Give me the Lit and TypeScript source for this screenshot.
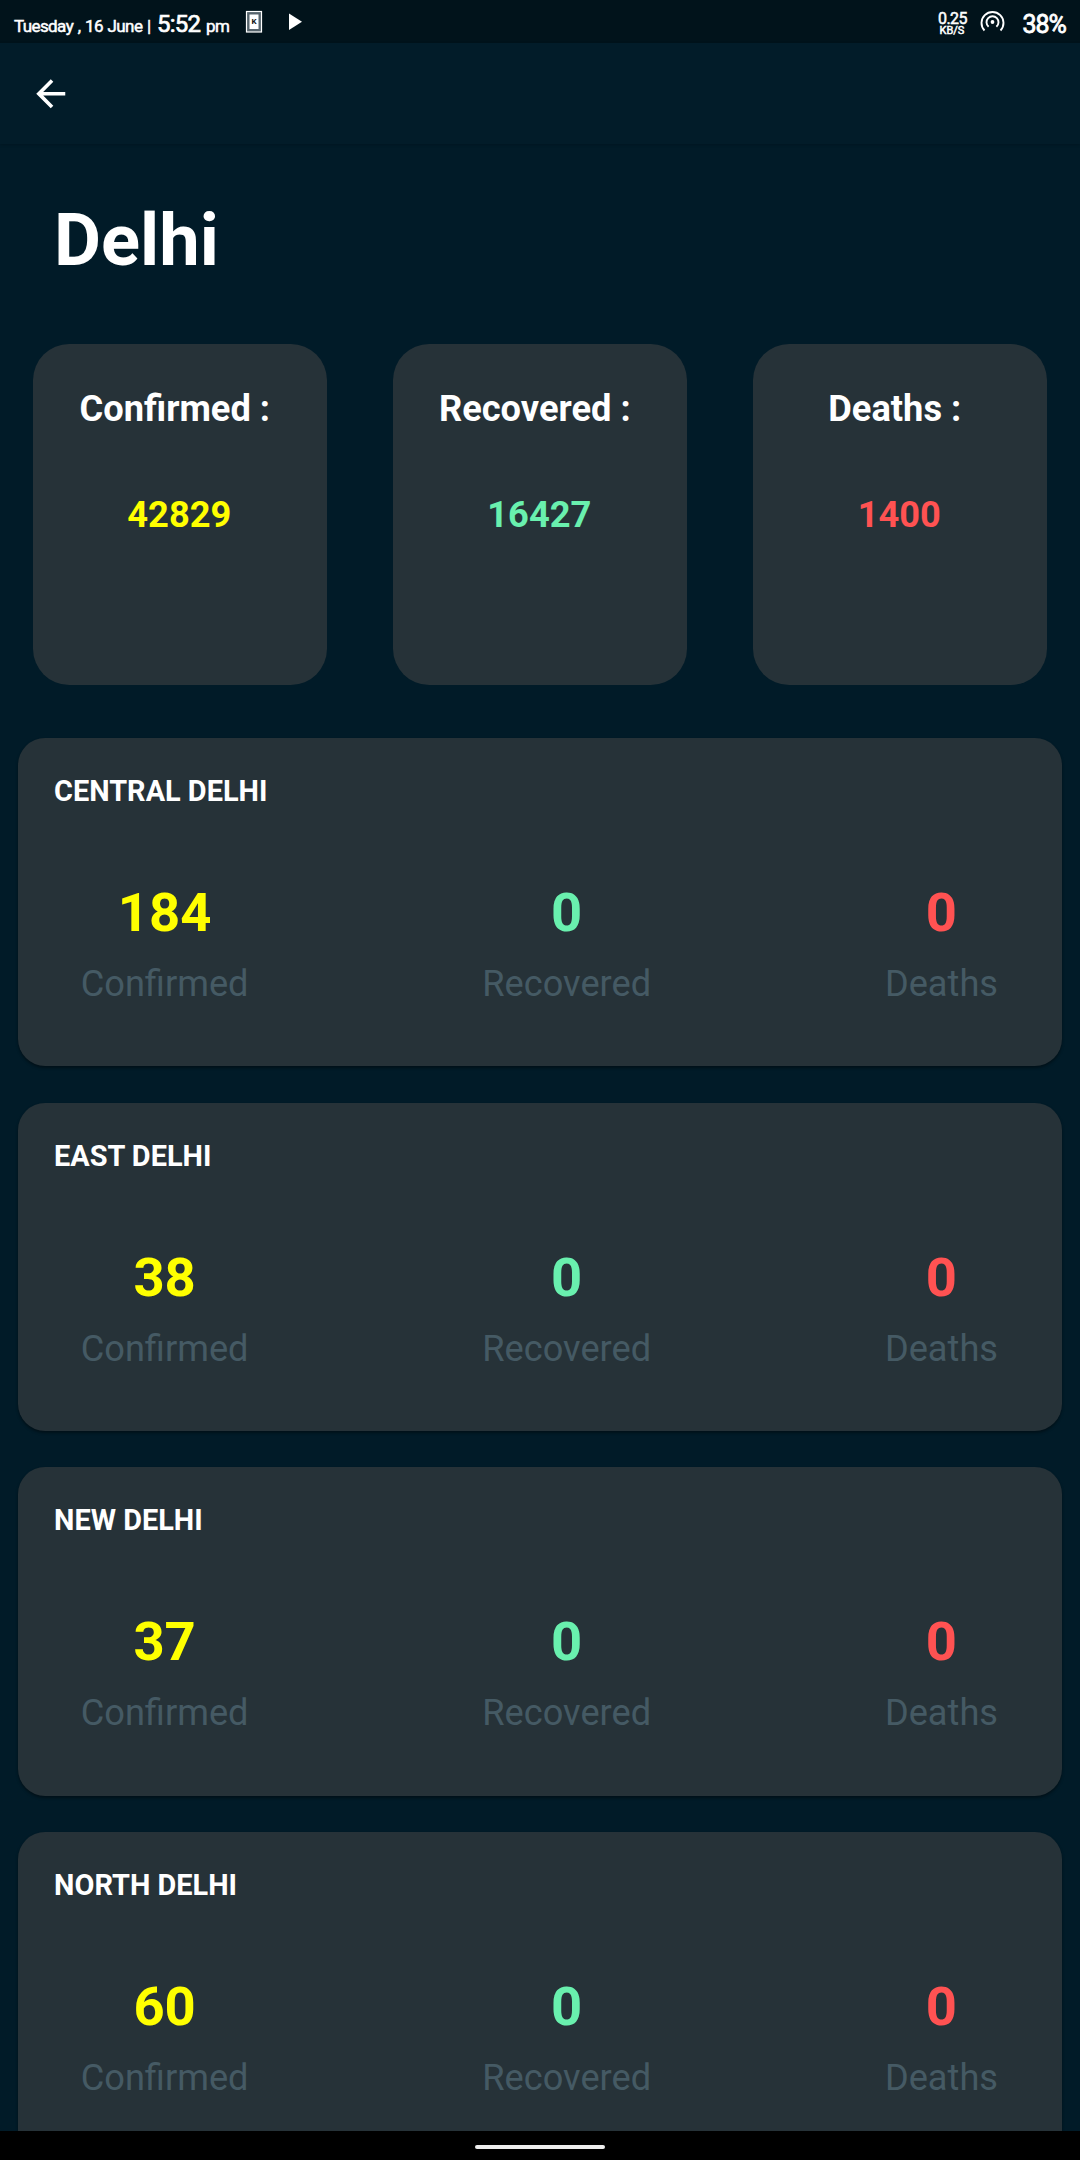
import { LitElement, html, css } from "lit";
import { customElement, property } from "lit/decorators.js";

interface District {
  name: string;
  confirmed: number;
  recovered: number;
  deaths: number;
}

const DISTRICTS: District[] = [
  { name: "CENTRAL DELHI", confirmed: 184, recovered: 0, deaths: 0 },
  { name: "EAST DELHI", confirmed: 38, recovered: 0, deaths: 0 },
  { name: "NEW DELHI", confirmed: 37, recovered: 0, deaths: 0 },
  { name: "NORTH DELHI", confirmed: 60, recovered: 0, deaths: 0 },
];

const TOTALS = [
  { label: "Confirmed", value: 42829, tone: "confirmed" },
  { label: "Recovered", value: 16427, tone: "recovered" },
  { label: "Deaths", value: 1400, tone: "deaths" },
];

const tones = css`
  .confirmed { color: #ffff00; }
  .recovered { color: #69f0ae; }
  .deaths { color: #ff5252; }
`;

@customElement("status-bar")
class StatusBar extends LitElement {
  static styles = css`
    :host {
      display: flex;
      justify-content: space-between;
      height: 43px;
      flex: none;
      background: #01131b;
    }
    svg { display: block; }
    text {
      fill: #fff;
      stroke: #fff;
      stroke-width: 0.5px;
      font-family: Roboto, sans-serif;
    }
    .date { font-size: 17px; letter-spacing: -0.6px; word-spacing: 1px; }
    .time { font-size: 24px; letter-spacing: -0.8px; stroke-width: 0.7px; }
    .rate { font-size: 16px; letter-spacing: -0.6px; }
    .unit { font-size: 11px; }
    .battery { font-size: 25px; letter-spacing: -1px; stroke-width: 0.8px; }
    .glyph { font-size: 8px; font-weight: 700; fill: #111; stroke: none; }
  `;
  render() {
    return html`
      <svg width="320" height="43" viewBox="0 0 320 43">
        <text class="date" x="14" y="32">Tuesday , 16 June |</text>
        <text class="time" x="157" y="32">5:52</text>
        <text class="date" x="206" y="32">pm</text>
        <rect x="246.5" y="11.5" width="15" height="20.5" fill="#56646c" stroke="#fff" stroke-width="1.2" />
        <rect x="249.5" y="14.5" width="9" height="14.5" fill="#fff" />
        <text class="glyph" x="251.4" y="24.4">K</text>
        <path d="M289 13.5 L302 21.7 L289 30 Z" fill="#fff" />
      </svg>
      <svg width="150" height="43" viewBox="930 0 150 43">
        <text class="rate" x="938" y="24">0.25</text>
        <text class="unit" x="939.5" y="34">KB/S</text>
        <g fill="none" stroke="#fff" stroke-width="1.9">
          <path d="M984.5 30.5 A11 11 0 1 1 1000.5 30.5" />
          <path d="M988.6 26.8 A6 6 0 1 1 996.4 26.8" />
        </g>
        <circle cx="992.5" cy="22" r="1.9" fill="#fff" />
        <text class="battery" x="1022.5" y="33">38%</text>
      </svg>
    `;
  }
}

@customElement("total-card")
class TotalCard extends LitElement {
  @property() label = "";
  @property() tone = "";
  @property({ type: Number }) value = 0;
  static styles = [
    tones,
    css`
      :host {
        display: flex;
        flex-direction: column;
        align-items: center;
        gap: 64px;
        box-sizing: border-box;
        height: 341px;
        padding: 44px 1.4px 0 0;
        border-radius: 36.25px;
        background: #263238;
        font-size: 36.25px;
        line-height: 42px;
        font-weight: 700;
      }
      .label { color: #fff; white-space: pre; }
    `,
  ];
  render() {
    return html`
      <div class="label">${this.label + " : "}</div>
      <div class=${this.tone}>${this.value}</div>
    `;
  }
}

@customElement("district-card")
class DistrictCard extends LitElement {
  @property({ attribute: false }) district!: District;
  static styles = [
    tones,
    css`
      :host {
        display: block;
        flex: none;
        box-sizing: border-box;
        height: 328.6px;
        padding: 36px 36px 0;
        border-radius: 27.2px;
        background: #263238;
        box-shadow: 0 2px 3px rgba(0, 0, 0, 0.4);
      }
      .name {
        color: #fff;
        font-size: 28.9px;
        line-height: 34px;
        font-weight: 700;
      }
      .stats {
        display: flex;
        justify-content: space-between;
        padding: 73px 27.9px 0 26.6px;
      }
      .stat {
        display: flex;
        flex-direction: column;
        align-items: center;
        gap: 19px;
      }
      .value { font-size: 54.4px; line-height: 63px; font-weight: 700; }
      .caption { color: #455a64; font-size: 36.2px; line-height: 42px; }
    `,
  ];
  private stat(tone: string, value: number, caption: string) {
    return html`<div class="stat">
      <div class="value ${tone}">${value}</div>
      <div class="caption">${caption}</div>
    </div>`;
  }
  render() {
    const d = this.district;
    return html`
      <div class="name">${d.name}</div>
      <div class="stats">
        ${this.stat("confirmed", d.confirmed, "Confirmed")}
        ${this.stat("recovered", d.recovered, "Recovered")}
        ${this.stat("deaths", d.deaths, "Deaths")}
      </div>
    `;
  }
}

@customElement("app-root")
class AppRoot extends LitElement {
  static styles = css`
    :host {
      display: flex;
      flex-direction: column;
      width: 1080px;
      height: 2160px;
      overflow: hidden;
      background: #011b28;
      font-family: Roboto, sans-serif;
    }
    .appbar {
      display: flex;
      align-items: center;
      flex: none;
      box-sizing: border-box;
      height: 101px;
      padding-left: 29px;
      background: #021c29;
      box-shadow: 0 1px 3px rgba(0, 0, 0, 0.2);
    }
    .back { display: block; }
    .content {
      display: flex;
      flex-direction: column;
      flex: 1;
      min-height: 0;
      overflow: hidden;
    }
    h1 {
      flex: none;
      margin: 0;
      padding: 55px 54px 61px;
      color: #fff;
      font-size: 72.3px;
      line-height: 84px;
      font-weight: 700;
    }
    .totals {
      display: grid;
      grid-template-columns: repeat(3, 294px);
      gap: 66px;
      flex: none;
      padding: 0 33px;
    }
    .districts {
      display: flex;
      flex-direction: column;
      gap: 36.2px;
      padding: 52.8px 18.1px 0;
    }
    .nav {
      display: flex;
      justify-content: center;
      flex: none;
      box-sizing: border-box;
      height: 29px;
      padding-top: 14px;
      background: #000;
    }
    .handle {
      width: 130px;
      height: 4px;
      border-radius: 2px;
      background: #eee;
    }
  `;
  render() {
    return html`
      <status-bar></status-bar>
      <div class="appbar">
        <svg class="back" width="43.5" height="43.5" viewBox="0 0 24 24" fill="#fff">
          <path d="M20 11H7.83l5.59-5.59L12 4l-8 8 8 8 1.41-1.41L7.83 13H20v-2z" />
        </svg>
      </div>
      <div class="content">
        <h1>Delhi</h1>
        <div class="totals">
          ${TOTALS.map(
            (t) => html`<total-card .label=${t.label} .tone=${t.tone} .value=${t.value}></total-card>`
          )}
        </div>
        <div class="districts">
          ${DISTRICTS.map((d) => html`<district-card .district=${d}></district-card>`)}
        </div>
      </div>
      <div class="nav"><div class="handle"></div></div>
    `;
  }
}
